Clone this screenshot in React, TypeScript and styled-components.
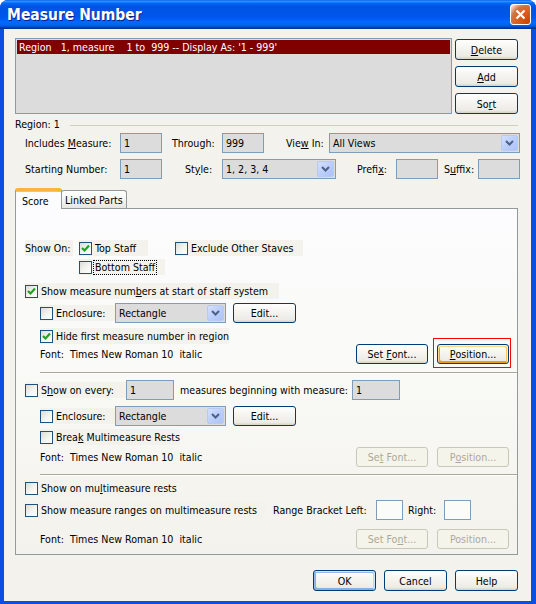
import styled, { createGlobalStyle, css } from 'styled-components';

const dialogBg = '#f3f2ec';

const GlobalStyle = createGlobalStyle`
  html, body { margin: 0; padding: 0; }
  body {
    background: #fff;
    font-family: 'DejaVu Sans Condensed', 'DejaVu Sans', sans-serif;
    font-size: 10.6px;
    color: #000;
  }
  * { box-sizing: border-box; }
`;

const Window = styled.div`
  width: 536px;
  height: 604px;
  display: flex;
  flex-direction: column;
  border-radius: 8px 8px 0 0;
  overflow: hidden;
  background: #0a4ee6;
`;

const TitleBar = styled.div`
  height: 29px;
  flex: none;
  display: flex;
  align-items: center;
  padding: 0 5px 0 7px;
  background: linear-gradient(
    180deg,
    #0058ee 0%,
    #3593ff 4%,
    #288eff 6%,
    #127dff 8%,
    #036ffc 10%,
    #0262ee 14%,
    #0057e5 20%,
    #0054e3 24%,
    #0055eb 56%,
    #005bf5 66%,
    #026afe 76%,
    #0062ef 86%,
    #0052d6 92%,
    #0040ab 94%,
    #003092 100%
  );
`;

const Title = styled.div`
  flex: 1;
  color: #fff;
  font-family: 'DejaVu Sans Condensed', 'DejaVu Sans', sans-serif;
  font-weight: bold;
  font-size: 15.5px;
  text-shadow: 1px 1px #0f1f8a;
  padding-top: 1px;
`;

const CloseButton = styled.div`
  width: 21px;
  height: 21px;
  border: 1px solid #fff;
  border-radius: 3px;
  background: radial-gradient(
    circle at 90% 90%,
    #cc4600 0%,
    #dc6527 55%,
    #cd7546 70%,
    #ffccb2 90%,
    #fff 100%
  );
  display: flex;
  align-items: center;
  justify-content: center;
`;

const Client = styled.div`
  flex: 1;
  margin: 0 5px 3px 4px;
  background: ${dialogBg};
  padding: 9px 13px 0 11px;
  display: flex;
  flex-direction: column;
`;

const TopSection = styled.div`
  display: flex;
  gap: 3px;
`;

const ListBox = styled.div`
  flex: 1;
  height: 76px;
  border: 1px solid #7f9db9;
  background: #dcdcdc;
  padding: 1px;
`;

const ListRow = styled.div`
  height: 14px;
  line-height: 14px;
  background: #800000;
  color: #fff;
  padding-left: 2px;
  white-space: pre;
`;

const ButtonColumn = styled.div`
  width: 63px;
  display: flex;
  flex-direction: column;
  gap: 6px;
  padding-top: 1px;
`;

type ButtonVariant = 'normal' | 'default' | 'focus' | 'disabled';

const Button = styled.div<{ $w?: number; $h?: number; $ml?: number; $variant?: ButtonVariant }>`
  width: ${({ $w }) => $w ?? 63}px;
  height: ${({ $h }) => $h ?? 21}px;
  margin-left: ${({ $ml }) => $ml ?? 0}px;
  flex: none;
  border: 1px solid #003c74;
  border-radius: 3px;
  background: linear-gradient(180deg, #fff 0%, #f6f5f1 40%, #ecebe6 86%, #d6d0c5 100%);
  display: flex;
  align-items: center;
  justify-content: center;
  white-space: pre;
  ${({ $variant }) =>
    $variant === 'default' &&
    css`
      box-shadow: inset -1px 1px #cee7ff, inset 1px 2px #98b8ea, inset -2px 2px #bcd4f6,
        inset 1px -1px #89ade4, inset 2px -2px #89ade4;
    `}
  ${({ $variant }) =>
    $variant === 'focus' &&
    css`
      box-shadow: inset -1px 1px #fff0cf, inset 1px 2px #fdd889, inset -2px 2px #fbc761,
        inset 2px -2px #e5a01a;
    `}
  ${({ $variant }) =>
    $variant === 'disabled' &&
    css`
      border-color: #c9c7ba;
      color: #aca899;
      background: #f5f4ea;
    `}
`;

const U = styled.span`
  text-decoration: underline;
  text-underline-offset: 1px;
`;

const GroupRow = styled.div`
  display: flex;
  align-items: center;
  height: 12px;
  margin-top: 4px;
`;

const GroupLine = styled.div`
  flex: 1;
  height: 1px;
  margin: 3px 0 0 10px;
  background: #d0d0bf;
`;

const FieldRow = styled.div<{ $mt: number }>`
  display: flex;
  align-items: center;
  height: 20px;
  margin-top: ${({ $mt }) => $mt}px;
  padding-left: 10px;
`;

const Cell = styled.div<{ $w: number; $pl?: number }>`
  width: ${({ $w }) => $w}px;
  padding-left: ${({ $pl }) => $pl ?? 0}px;
  flex: none;
  white-space: pre;
`;

const TextBox = styled.div<{ $w: number; $light?: boolean }>`
  width: ${({ $w }) => $w}px;
  height: 20px;
  flex: none;
  border: 1px solid #7f9db9;
  background: ${({ $light }) => ($light ? '#fbfbf9' : '#dcdcdc')};
  padding-left: 3px;
  line-height: 18px;
`;

const SelectBox = styled.div<{ $w: number }>`
  width: ${({ $w }) => $w}px;
  height: 20px;
  flex: none;
  border: 1px solid #7f9db9;
  background: #dcdcdc;
  display: flex;
  align-items: center;
  padding: 1px;
`;

const SelectText = styled.div`
  flex: 1;
  padding-left: 2px;
`;

const ArrowButton = styled.div`
  width: 17px;
  height: 16px;
  border: 1px solid #bac9ee;
  border-radius: 2px;
  background: linear-gradient(135deg, #d4e0fd 0%, #bccffa 50%, #adc3f5 100%);
  display: flex;
  align-items: center;
  justify-content: center;
`;

const TabStrip = styled.div`
  display: flex;
  align-items: flex-end;
  height: 20px;
  margin-top: 9px;
  position: relative;
  z-index: 1;
`;

const Tab = styled.div<{ $active?: boolean }>`
  border: 1px solid #919b9c;
  border-bottom: none;
  border-radius: 3px 3px 0 0;
  display: flex;
  align-items: center;
  white-space: nowrap;
  ${({ $active }) =>
    $active
      ? css`
          width: 47px;
          height: 21px;
          margin-bottom: -1px;
          padding: 1px 0 0 6px;
          background: #fcfcfe;
          border-top: 3px solid #f9b440;
          box-shadow: inset 0 1px #ffc83c;
        `
      : css`
          width: 66px;
          height: 18px;
          margin-left: -1px;
          padding-left: 3px;
          background: linear-gradient(180deg, #fff 0%, #f3f3ef 60%, #e6e5df 100%);
        `}
`;

const TabPanel = styled.div`
  height: 347px;
  border: 1px solid #919b9c;
  background: linear-gradient(180deg, #fcfcfe 0%, #f9f9f6 50%, ${dialogBg} 100%);
  padding: 0 0 0 9px;
  display: flex;
  flex-direction: column;
`;

const PanelRow = styled.div<{ $mt: number; $h?: number; $indent?: number }>`
  display: flex;
  align-items: center;
  height: ${({ $h }) => $h ?? 16}px;
  margin-top: ${({ $mt }) => $mt}px;
  padding-left: ${({ $indent }) => $indent ?? 0}px;
`;

const Plain = styled.div<{ $w?: number; $pl?: number; $boxed?: boolean }>`
  ${({ $w }) => $w !== undefined && `width: ${$w}px;`}
  padding-left: ${({ $pl }) => $pl ?? 0}px;
  flex: none;
  white-space: pre;
  ${({ $boxed }) => $boxed && `background: ${dialogBg}; height: 16px; line-height: 16px;`}
`;

const CheckControl = styled.div<{ $w?: number; $ml?: number }>`
  display: flex;
  align-items: center;
  height: 16px;
  flex: none;
  ${({ $w }) => $w !== undefined && `width: ${$w}px;`}
  margin-left: ${({ $ml }) => $ml ?? 0}px;
  background: ${dialogBg};
`;

const CheckBox = styled.div`
  width: 13px;
  height: 13px;
  flex: none;
  border: 1px solid #1c5180;
  background: linear-gradient(135deg, #dcdcd7 0%, #f4f4f0 55%, #fff 100%);
  display: flex;
  align-items: center;
  justify-content: center;
`;

const CheckLabel = styled.span<{ $focus?: boolean }>`
  margin-left: 3px;
  white-space: pre;
  line-height: 13px;
  ${({ $focus }) => $focus && 'outline: 1px dotted #000; outline-offset: 0; padding: 0 1px; margin-left: 2px;'}
`;

const Separator = styled.div<{ $mt: number }>`
  height: 2px;
  margin: ${({ $mt }) => $mt}px 0 0 15px;
  border-top: 1px solid #aca899;
  border-bottom: 1px solid #fff;
`;

const FontRow = styled.div<{ $mt: number }>`
  display: flex;
  align-items: center;
  height: 20px;
  margin-top: ${({ $mt }) => $mt}px;
  padding: 0 8px 0 15px;
  gap: 9px;
`;

const FontText = styled.div`
  flex: 1;
  white-space: pre;
`;

const Marked = styled.div`
  position: relative;
  &::after {
    content: '';
    position: absolute;
    left: -4px;
    right: -2px;
    top: -6px;
    bottom: -4px;
    border: 1px solid #f00;
  }
`;

const Footer = styled.div`
  display: flex;
  justify-content: flex-end;
  gap: 8px;
  margin-top: 15px;
`;

const Check = ({ checked }: { checked?: boolean }) => (
  <CheckBox>
    {checked && (
      <svg width="9" height="9" viewBox="0 0 9 9">
        <polyline points="1,4 3.5,6.5 8,1.5" fill="none" stroke="#21a121" strokeWidth="2.2" />
      </svg>
    )}
  </CheckBox>
);

const Select = ({ w, value }: { w: number; value: string }) => (
  <SelectBox $w={w}>
    <SelectText>{value}</SelectText>
    <ArrowButton>
      <svg width="9" height="6" viewBox="0 0 9 6">
        <polyline points="1,1 4.5,4.5 8,1" fill="none" stroke="#4d6185" strokeWidth="2" />
      </svg>
    </ArrowButton>
  </SelectBox>
);

const CheckItem = ({
  checked,
  children,
  w,
  ml,
  focus,
}: {
  checked?: boolean;
  children: React.ReactNode;
  w?: number;
  ml?: number;
  focus?: boolean;
}) => (
  <CheckControl $w={w} $ml={ml}>
    <Check checked={checked} />
    <CheckLabel $focus={focus}>{children}</CheckLabel>
  </CheckControl>
);

const fontDesc = 'Font:  Times New Roman 10  italic';

const App = () => {
  return (
    <>
      <GlobalStyle />
      <Window>
        <TitleBar>
          <Title>Measure Number</Title>
          <CloseButton>
            <svg width="11" height="11" viewBox="0 0 11 11">
              <path d="M1.5 1.5 L9.5 9.5 M9.5 1.5 L1.5 9.5" stroke="#fff" strokeWidth="2.2" />
            </svg>
          </CloseButton>
        </TitleBar>
        <Client>
          <TopSection>
            <ListBox>
              <ListRow>{"Region   1, measure    1 to  999 -- Display As: '1 - 999'"}</ListRow>
            </ListBox>
            <ButtonColumn>
              <Button>
                <U>D</U>elete
              </Button>
              <Button>
                <U>A</U>dd
              </Button>
              <Button>
                So<U>r</U>t
              </Button>
            </ButtonColumn>
          </TopSection>

          <GroupRow>
            Region: 1
            <GroupLine />
          </GroupRow>

          <FieldRow $mt={3}>
            <Cell $w={95}>
              Includes <U>M</U>easure:
            </Cell>
            <TextBox $w={42}>1</TextBox>
            <Cell $w={60} $pl={10}>
              Through:
            </Cell>
            <TextBox $w={42}>999</TextBox>
            <Cell $w={65} $pl={22}>
              Vie<U>w</U> In:
            </Cell>
            <Select w={191} value="All Views" />
          </FieldRow>
          <FieldRow $mt={6}>
            <Cell $w={95}>
              Startin<U>g</U> Number:
            </Cell>
            <TextBox $w={42}>1</TextBox>
            <Cell $w={60} $pl={23}>
              St<U>y</U>le:
            </Cell>
            <Select w={114} value="1, 2, 3, 4" />
            <Cell $w={60} $pl={21}>
              Prefi<U>x</U>:
            </Cell>
            <TextBox $w={42} />
            <Cell $w={40} $pl={6}>
              S<U>u</U>ffix:
            </Cell>
            <TextBox $w={42} />
          </FieldRow>

          <TabStrip>
            <Tab $active>Score</Tab>
            <Tab>Linked Parts</Tab>
          </TabStrip>
          <TabPanel>
            <PanelRow $mt={31}>
              <Plain $w={48} $boxed>
                Show On:
              </Plain>
              <CheckItem checked w={69} ml={6}>
                Top Staff
              </CheckItem>
              <CheckItem w={128} ml={27}>
                Exclude Other Staves
              </CheckItem>
            </PanelRow>
            <PanelRow $mt={3} $indent={54}>
              <CheckItem w={86} focus>
                Bottom Staff
              </CheckItem>
            </PanelRow>
            <PanelRow $mt={8}>
              <CheckItem checked w={254}>
                Show measure num<U>b</U>ers at start of staff system
              </CheckItem>
            </PanelRow>
            <PanelRow $mt={4} $h={20} $indent={15}>
              <CheckItem w={75}>Enclosure:</CheckItem>
              <Select w={111} value="Rectangle" />
              <Button $w={63} $h={20} $ml={7}>
                Edit...
              </Button>
            </PanelRow>
            <PanelRow $mt={5} $indent={15}>
              <CheckItem checked w={189}>
                Hide first measure number in region
              </CheckItem>
            </PanelRow>
            <FontRow $mt={0}>
              <FontText>{fontDesc}</FontText>
              <Button $w={72} $h={20}>
                Set <U>F</U>ont...
              </Button>
              <Marked>
                <Button $w={72} $h={20} $variant="focus">
                  <U>P</U>osition...
                </Button>
              </Marked>
            </FontRow>

            <Separator $mt={8} />

            <PanelRow $mt={6} $h={20}>
              <CheckItem w={101}>
                S<U>h</U>ow on every:
              </CheckItem>
              <TextBox $w={48}>1</TextBox>
              <Plain $w={178} $pl={6}>
                measures beginning with measure:
              </Plain>
              <TextBox $w={48}>1</TextBox>
            </PanelRow>
            <PanelRow $mt={6} $h={20} $indent={15}>
              <CheckItem w={75}>Enclosure:</CheckItem>
              <Select w={111} value="Rectangle" />
              <Button $w={63} $h={20} $ml={7}>
                Edit...
              </Button>
            </PanelRow>
            <PanelRow $mt={3} $indent={15}>
              <CheckItem>
                Brea<U>k</U> Multimeasure Rests
              </CheckItem>
            </PanelRow>
            <FontRow $mt={2}>
              <FontText>{fontDesc}</FontText>
              <Button $w={72} $h={20} $variant="disabled">
                Se<U>t</U> Font...
              </Button>
              <Button $w={72} $h={20} $variant="disabled">
                P<U>o</U>sition...
              </Button>
            </FontRow>

            <Separator $mt={7} />

            <PanelRow $mt={4}>
              <CheckItem>
                Show on mu<U>l</U>timeasure rests
              </CheckItem>
            </PanelRow>
            <PanelRow $mt={4} $h={20}>
              <CheckItem w={240}>Show measure ranges on multimeasure rests</CheckItem>
              <Plain $w={111} $pl={8}>
                Range Bracket Left:
              </Plain>
              <TextBox $w={27} $light />
              <Plain $w={41} $pl={5}>
                Right:
              </Plain>
              <TextBox $w={27} $light />
            </PanelRow>
            <FontRow $mt={9}>
              <FontText>{fontDesc}</FontText>
              <Button $w={72} $h={20} $variant="disabled">
                Set Fo<U>n</U>t...
              </Button>
              <Button $w={72} $h={20} $variant="disabled">
                Position...
              </Button>
            </FontRow>
          </TabPanel>

          <Footer>
            <Button $variant="default">OK</Button>
            <Button>Cancel</Button>
            <Button>Help</Button>
          </Footer>
        </Client>
      </Window>
    </>
  );
};

export default App;
